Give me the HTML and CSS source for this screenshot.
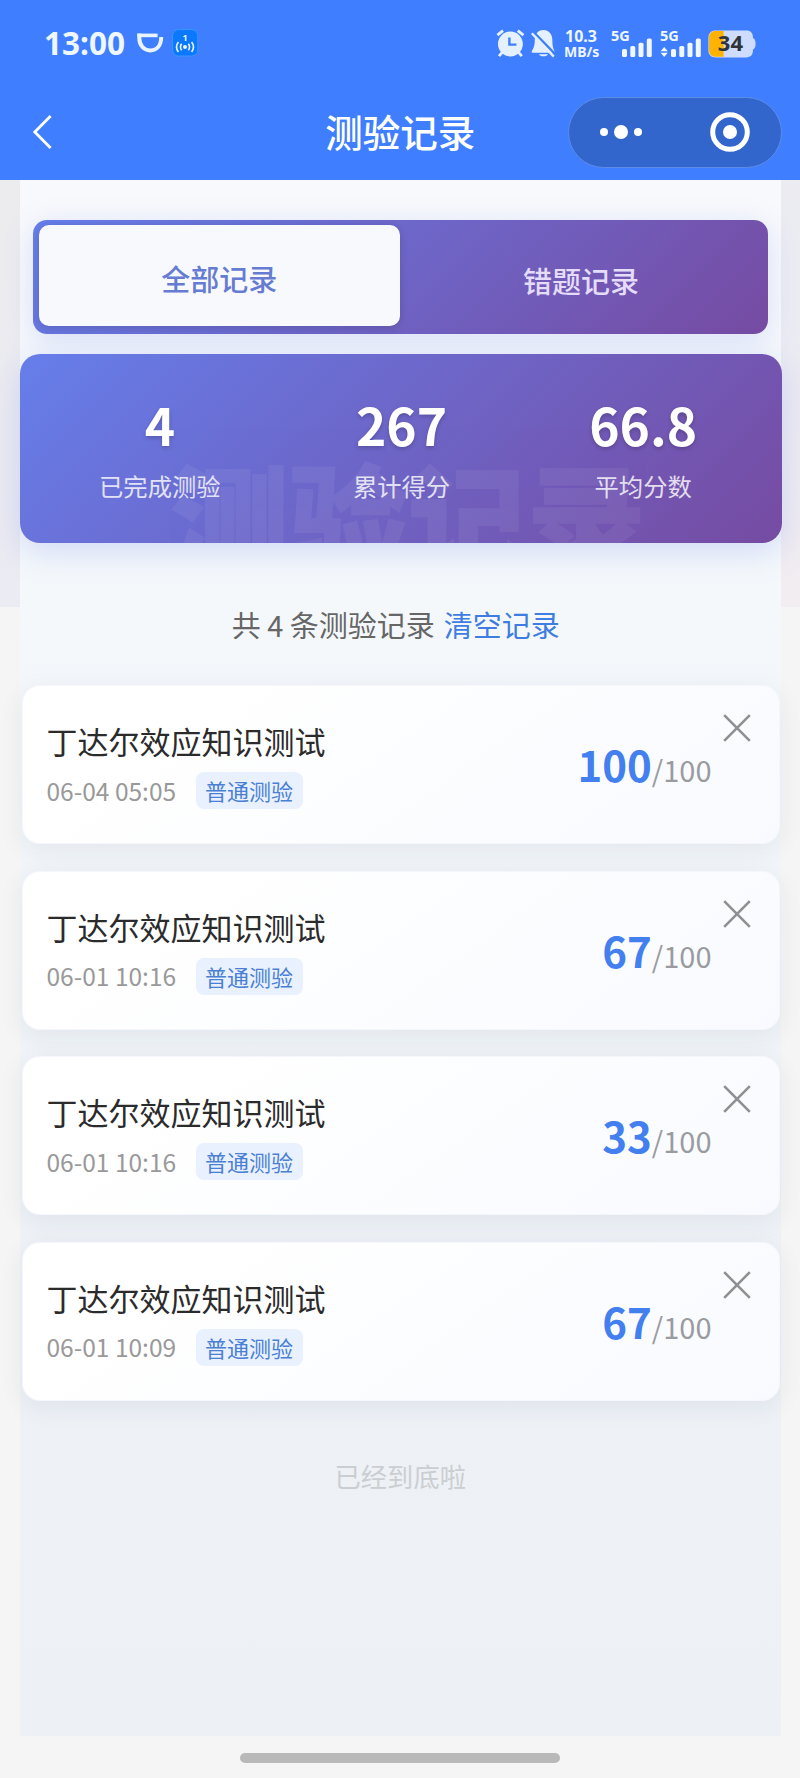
FILE: index.html
```html
<!DOCTYPE html>
<html lang="zh-CN">
<head>
<meta charset="utf-8">
<title>测验记录</title>
<link rel="stylesheet" href="styles.css">
</head>
<body>
<svg class="defs" width="0" height="0" aria-hidden="true">
  <symbol id="close" viewBox="0 0 28 28"><path d="M1.2 1.2 26.8 26.8M26.8 1.2 1.2 26.8" fill="none" stroke="#8f9094" stroke-width="2.6"/></symbol>
</svg>
<header class="header">
  <div class="status">
    <div class="status-left">
      <span class="clock">13:00</span>
      <svg class="icon-cup" width="27" height="20" viewBox="0 0 27 20"><path d="M.4 2.4H20.6" stroke="#e9f4ff" stroke-width="3.6"/><path d="M2.3 .6V5C2.3 12.4 7 17.4 13.3 17.4C19.5 17.4 24.2 12.8 24.2 4" fill="none" stroke="#e9f4ff" stroke-width="4"/></svg>
      <svg class="icon-cast" width="27" height="28" viewBox="0 0 27 28"><rect x=".6" y=".6" width="25.2" height="26.4" rx="6" fill="#0a78ff" stroke="#3c96ff"/><text x="13.2" y="11.6" text-anchor="middle" class="cast-num">1</text><circle cx="13" cy="18" r="2" fill="#e9f4ff"/><path d="M9.6 14.8Q7.4 18 9.6 21.4M16.4 14.8Q18.6 18 16.4 21.4M6.4 13Q2.6 18 6.4 23M19.6 13Q23.4 18 19.6 23" fill="none" stroke="#e9f4ff" stroke-width="1.6"/></svg>
    </div>
    <div class="status-right">
      <svg class="icon-alarm" width="29" height="29" viewBox="0 0 29 29"><circle cx="14.4" cy="15" r="12.4" fill="#e6f1ff"/><path d="M1.4 6.2 7 1.6M27.4 6.2 21.8 1.6M6.2 23.4 3 27.2M22.6 23.4 25.8 27.2" stroke="#e6f1ff" stroke-width="2.8"/><path d="M13.4 8.6V15.6H20.4" fill="none" stroke="#3f7efc" stroke-width="2.4"/></svg>
      <svg class="icon-bell" width="25" height="28" viewBox="0 0 25 28"><path d="M12.5 0C6.6 0 3.8 4.6 3.8 9.6C3.8 15.4 2.6 18.6 .8 21V22.8H23.4V21C22 18.6 21.3 15.4 21.3 9.6C21.3 4.6 18 0 12.5 0ZM8 24.2H17C16 27 9 27 8 24.2Z" fill="#e6f1ff"/><path d="M2.6 2 25 25" stroke="#3f7efc" stroke-width="2.4"/><path d="M.8 3.2 22.8 26.6" stroke="#e6f1ff" stroke-width="2.3"/></svg>
      <div class="speed"><span>10.3</span><span>MB/s</span></div>
      <svg class="signal" width="42" height="36" viewBox="0 -8 42 36"><text x="0" y="10.8" class="net">5G</text><g fill="#f0f7ff"><rect x="11" y="19" width="5" height="8" rx="1.6"/><rect x="19.3" y="16" width="5" height="11" rx="1.6"/><rect x="27.5" y="12.7" width="5" height="14.3" rx="1.6"/><rect x="35.8" y="8.5" width="5" height="18.5" rx="1.6"/></g></svg>
      <svg class="signal second" width="42" height="36" viewBox="0 -8 42 36"><text x="0" y="10.8" class="net">5G</text><g fill="#f0f7ff"><path d="M4.2 17 7.8 21.2H.6ZM4.2 27 .6 22.8H7.8Z"/><rect x="11" y="19" width="5" height="8" rx="1.6"/><rect x="19.3" y="16" width="5" height="11" rx="1.6"/><rect x="27.5" y="12.7" width="5" height="14.3" rx="1.6"/><rect x="35.8" y="8.5" width="5" height="18.5" rx="1.6"/></g></svg>
      <svg class="battery" width="48" height="36" viewBox="0 -4 48 36"><path d="M8 .4H38C43 .4 45 3 45 8Q47.6 9 47.6 14Q47.6 18 45 19.6C45 25 43 27.4 38 27.4H8C3 27.4 .4 25 .4 20V8C.4 3 3 .4 8 .4Z" fill="#cddcff"/><path d="M15.6 1H8C3.4 1 1 3.4 1 8V20C1 24.4 3.4 26.8 8 26.8H15.6Z" fill="#ffb300"/><text x="22.4" y="21.2" text-anchor="middle" class="level">34</text></svg>
    </div>
  </div>
  <nav class="nav">
    <svg class="back" width="20" height="36" viewBox="0 0 20 36"><path d="M18.6 2 2.8 18 18.6 34" fill="none" stroke="#fff" stroke-width="2.8"/></svg>
    <h1 class="title">测验记录</h1>
    <div class="capsule">
      <svg width="44" height="16" viewBox="0 0 44 16"><g fill="#fff"><circle cx="5" cy="8" r="4"/><circle cx="22" cy="8" r="7"/><circle cx="39" cy="8" r="4"/></g></svg>
      <i class="divider"></i>
      <svg width="40" height="40" viewBox="0 0 40 40"><circle cx="20" cy="20" r="17.3" fill="none" stroke="#fff" stroke-width="5"/><circle cx="20" cy="20" r="7" fill="#fff"/></svg>
    </div>
  </nav>
</header>
<div class="page">
  <main class="content">
    <div class="tabs">
      <div class="tab active">全部记录</div>
      <div class="tab">错题记录</div>
    </div>
    <section class="stats">
      <div class="watermark">测验记录</div>
      <div class="stat"><b>4</b><span>已完成测验</span></div>
      <div class="stat"><b>267</b><span>累计得分</span></div>
      <div class="stat"><b>66.8</b><span>平均分数</span></div>
    </section>
    <p class="summary">共 4 条测验记录<a class="clear">清空记录</a></p>
    <section class="list">
      <article class="card">
        <div class="info"><h2>丁达尔效应知识测试</h2><div class="meta"><time>06-04 05:05</time><span class="tag">普通测验</span></div></div>
        <div class="score"><b>100</b>/100</div><svg class="close"><use href="#close"/></svg>
      </article>
      <article class="card">
        <div class="info"><h2>丁达尔效应知识测试</h2><div class="meta"><time>06-01 10:16</time><span class="tag">普通测验</span></div></div>
        <div class="score"><b>67</b>/100</div><svg class="close"><use href="#close"/></svg>
      </article>
      <article class="card">
        <div class="info"><h2>丁达尔效应知识测试</h2><div class="meta"><time>06-01 10:16</time><span class="tag">普通测验</span></div></div>
        <div class="score"><b>33</b>/100</div><svg class="close"><use href="#close"/></svg>
      </article>
      <article class="card">
        <div class="info"><h2>丁达尔效应知识测试</h2><div class="meta"><time>06-01 10:09</time><span class="tag">普通测验</span></div></div>
        <div class="score"><b>67</b>/100</div><svg class="close"><use href="#close"/></svg>
      </article>
    </section>
    <p class="end">已经到底啦</p>
  </main>
</div>
<footer class="home"><i class="home-bar"></i></footer>
</body>
</html>
```
FILE: styles.css
```css
* { box-sizing: border-box; }
body {
  margin: 0;
  width: 800px;
  height: 1778px;
  overflow: hidden;
  background: #f5f5f5;
  font-family: "Noto Sans CJK SC", sans-serif;
}
h1, h2, p { margin: 0; font-weight: 400; }
svg { display: block; flex: none; }
.defs { position: absolute; }

/* header */
.header { height: 180px; background: #3f7fff; }
.status {
  height: 84px;
  padding: 0 44px 0 44px;
  display: flex;
  justify-content: space-between;
  font-family: "Noto Sans", sans-serif;
  font-weight: 700;
  color: #eef6ff;
}
.status-left, .status-right { display: flex; align-items: flex-start; }
.clock { font-size: 31.5px; line-height: 42px; margin-top: 22px; width: 93px; }
.icon-cup { margin-top: 33px; }
.icon-cast { margin: 29px 0 0 8px; }
.cast-num { font-size: 9px; fill: #e9f4ff; }
.icon-alarm { margin-top: 29px; }
.icon-bell { margin: 30px 0 0 6px; }
.speed {
  width: 46px;
  margin: 28px 0 0 8px;
  display: flex;
  flex-direction: column;
  font-size: 16px;
  line-height: 16px;
}
.speed span:first-child { padding-left: 1px; }
.speed span:last-child { font-size: 14px; line-height: 15px; }
.signal { margin: 22px 0 0 1px; }
.signal.second { margin-left: 7px; }
.net { font-size: 14.5px; font-weight: 700; fill: #f0f7ff; }
.battery { margin: 26px 0 0 6px; }
.level { font-size: 22px; fill: #303438; }
.nav {
  height: 96px;
  padding: 0 18.5px 0 32px;
  display: grid;
  grid-template-columns: 214px 1fr 214px;
  align-items: center;
}
.title {
  font-size: 37.5px;
  line-height: 54px;
  font-weight: 500;
  color: #fff;
  text-align: center;
  white-space: nowrap;
  margin: -2px 0 0 -13px;
}
.capsule {
  height: 71px;
  border-radius: 36px;
  border: 1px solid #5d8be8;
  background: #3366cc;
  display: flex;
  align-items: center;
  padding: 0 31px 0 30px;
}
.divider { width: 1px; height: 43px; background: #5582da; margin: 0 35px 0 32px; }

/* page */
.page {
  height: 1556px;
  padding: 0 19.5px 0 20px;
  background: linear-gradient(160deg, #ececee, #ebebf3 60%, #f2edf1) no-repeat 0 0 / 100% 427px;
}
.content {
  height: 1556px;
  padding-top: 40px;
  background: linear-gradient(180deg, #f8f9fc 0, #f4f8fb 420px, #eef2f7 1100px, #edf0f5 100%);
}
.tabs {
  margin: 0 12.5px 0 12.5px;
  height: 114px;
  padding: 5px 6px 8px;
  border-radius: 14px;
  display: grid;
  grid-template: 101px / 1fr 1fr;
  background: linear-gradient(135deg, #667eea, #764ba2);
  box-shadow: 0 6px 30px rgba(102, 126, 234, .2);
}
.tab {
  border-radius: 10px;
  font-size: 29px;
  line-height: 111px;
  font-weight: 500;
  text-align: center;
  color: #e4dcfa;
}
.tab.active { line-height: 106px; color: #667bd2; background: #f8f9fd; box-shadow: 0 2px 8px rgba(0, 0, 0, .15); }
.stats {
  position: relative;
  margin: 20px -1.5px 0 0;
  height: 189px;
  padding: 38px 18px 0 19px;
  border-radius: 20px;
  overflow: hidden;
  display: grid;
  grid-template-columns: repeat(3, 1fr);
  background: linear-gradient(135deg, #667eea, #764ba2);
  box-shadow: 0 8px 32px rgba(102, 126, 234, .25);
}
.watermark {
  position: absolute;
  left: 14px;
  right: 0;
  top: 85px;
  font-size: 119px;
  line-height: 150px;
  font-weight: 900;
  text-align: center;
  color: #fff;
  -webkit-text-stroke: 1.5px #fff;
  opacity: .06;
}
.stat { position: relative; display: flex; flex-direction: column; align-items: center; color: #fff; }
.stat b { font-size: 51.5px; line-height: 64px; text-shadow: 0 2px 4px rgba(0, 0, 0, .2); }
.stat span { font-size: 24.3px; line-height: 36px; margin-top: 12px; opacity: .8; }
.summary {
  margin-top: 59px;
  padding-right: 9px;
  height: 44px;
  display: flex;
  justify-content: center;
  gap: 9px;
  font-size: 29px;
  line-height: 44px;
  color: #666;
}
.clear { color: #3f7de0; }
.list { margin: 39px 1px 0 1.5px; display: flex; flex-direction: column; gap: 26.6px; }
.card {
  height: 159px;
  padding: 32px 28px 0 24px;
  display: flex;
  border-radius: 18px;
  border: 1px solid #f6f7fd;
  background: linear-gradient(145deg, #fff 20%, #f8faff);
  box-shadow: 0 6px 26px rgba(30, 40, 70, .07);
}
.info { flex: 1; }
.info h2 { font-size: 31px; line-height: 46px; color: #2b2b2b; }
.meta { display: flex; align-items: center; margin-top: 8px; height: 37px; }
.meta time { width: 149px; font-size: 24.5px; line-height: 36px; color: #999; white-space: nowrap; }
.tag {
  width: 107px;
  height: 37px;
  border-radius: 8px;
  background: #e9f1fe;
  color: #4a80d4;
  font-size: 22px;
  line-height: 36px;
  text-align: center;
}
.score { font-size: 29px; line-height: 60px; margin-top: 16px; color: #9a9b9f; }
.score b { font-size: 42px; font-weight: 700; color: #437fee; }
.close { width: 28px; height: 28px; margin: -4px 0 0 11px; }
.end { margin-top: 55px; font-size: 26.3px; line-height: 40px; text-align: center; color: #cbced1; }
.home { height: 42px; padding-top: 17px; display: flex; justify-content: center; }
.home-bar { width: 320px; height: 10px; border-radius: 5px; background: #b9b9b9; }
```
